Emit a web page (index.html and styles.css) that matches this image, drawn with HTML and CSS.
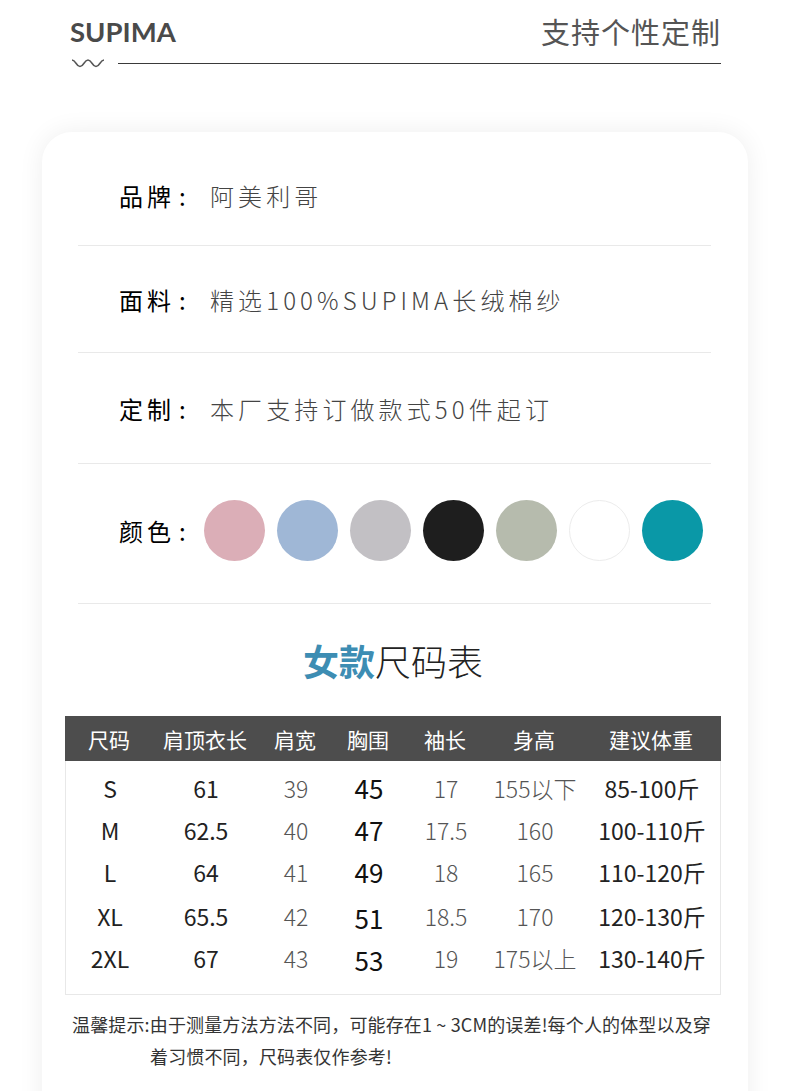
FILE: index.html
```html
<!DOCTYPE html>
<html lang="zh">
<head>
<meta charset="utf-8">
<link rel="stylesheet" href="styles.css">
</head>
<body>
<div class="page">
  <header class="top">
    <div class="top-row">
      <div class="brand">SUPIMA</div>
      <div class="slogan">支持个性定制</div>
    </div>
    <div class="rule-row">
      <svg class="wave" width="34" height="12" viewBox="0 0 34 12"><path d="M1 3 C5 3 5 9.5 9 9.5 S13 3 17 3 S21 9.5 25 9.5 S29 3 33 3" fill="none" stroke="#555" stroke-width="1.5"/></svg>
      <span class="rule"></span>
    </div>
  </header>

  <section class="card">
    <div class="info">
      <div class="row row-1"><span class="label">品牌<i>:</i></span><span class="value">阿美利哥</span></div>
      <div class="row row-2"><span class="label">面料<i>:</i></span><span class="value">精选100%SUPIMA长绒棉纱</span></div>
      <div class="row row-3"><span class="label">定制<i>:</i></span><span class="value">本厂支持订做款式50件起订</span></div>
      <div class="row row-4"><span class="label">颜色<i>:</i></span>
        <div class="swatches">
          <span class="dot pink"></span>
          <span class="dot blue"></span>
          <span class="dot grey"></span>
          <span class="dot black"></span>
          <span class="dot sage"></span>
          <span class="dot white"></span>
          <span class="dot teal"></span>
        </div>
      </div>
    </div>

    <h2 class="title"><b>女款</b>尺码表</h2>

    <div class="table">
      <div class="thead">
        <span>尺码</span><span>肩顶衣长</span><span>肩宽</span><span>胸围</span><span>袖长</span><span>身高</span><span>建议体重</span>
      </div>
      <div class="tbody">
        <div class="tr"><span>S</span><span>61</span><span class="lt">39</span><span class="bd">45</span><span class="lt">17</span><span class="lt">155以下</span><span>85-100斤</span></div>
        <div class="tr"><span>M</span><span>62.5</span><span class="lt">40</span><span class="bd">47</span><span class="lt">17.5</span><span class="lt">160</span><span>100-110斤</span></div>
        <div class="tr"><span>L</span><span>64</span><span class="lt">41</span><span class="bd">49</span><span class="lt">18</span><span class="lt">165</span><span>110-120斤</span></div>
        <div class="tr"><span>XL</span><span>65.5</span><span class="lt">42</span><span class="bd low">51</span><span class="lt">18.5</span><span class="lt">170</span><span>120-130斤</span></div>
        <div class="tr"><span>2XL</span><span>67</span><span class="lt">43</span><span class="bd low">53</span><span class="lt">19</span><span class="lt">175以上</span><span>130-140斤</span></div>
      </div>
    </div>

    <div class="note">
      <p class="note-1">温馨提示:由于测量方法方法不同，可能存在1 ~ 3CM的误差!每个人的体型以及穿</p>
      <p class="note-2">着习惯不同，尺码表仅作参考!</p>
    </div>
  </section>
</div>
</body>
</html>
```

FILE: styles.css
```css
* { box-sizing: border-box; margin: 0; padding: 0; }
html, body { background: #fff; }
body {
  font-family: "Noto Sans CJK SC", "Noto Sans", sans-serif;
  color: #222;
  overflow: hidden;
}
.page { width: 790px; height: 1091px; overflow: hidden; }

.top { padding: 0 69px 0 70px; }
.top-row {
  height: 52px;
  padding-top: 12px;
  display: flex;
  justify-content: space-between;
  align-items: center;
}
.brand {
  font-family: Lato, "Liberation Sans", sans-serif;
  font-weight: 700;
  font-size: 27.5px;
  line-height: 40px;
  color: #4a4a4a;
}
.slogan {
  font-size: 29px;
  line-height: 40px;
  color: #555;
  letter-spacing: 1px;
  margin-top: -3px;
}
.rule-row {
  height: 22px;
  display: flex;
  align-items: center;
}
.wave { display: block; margin-left: 1px; }
.rule {
  flex: 1;
  height: 1px;
  background: #3a3a3a;
  margin-left: 13px;
}

.card {
  margin: 58px 42px 0;
  height: 1100px;
  background: #fff;
  border-radius: 30px 30px 0 0;
  box-shadow: 0 0 26px rgba(0, 0, 0, 0.07);
}
.info { margin: 0 37px 0 36px; }
.row {
  display: flex;
  align-items: center;
  padding-left: 41px;
  border-bottom: 1px solid #e9e9e9;
}
.row-1 { height: 114px; padding-top: 13px; }
.row-2 { height: 107px; }
.row-3 { height: 111px; }
.row-4 { height: 140px; padding-bottom: 6px; }
.label {
  font-size: 24px;
  color: #000;
  letter-spacing: 4px;
  font-weight: 400;
  width: 91px;
  flex: none;
}
.label i { font-style: normal; font-weight: 400; margin-left: 4px; }
.value {
  font-size: 24px;
  color: #444;
  font-weight: 300;
  letter-spacing: 4.1px;
}
.swatches { display: flex; gap: 12px; margin-left: -6px; }
.dot {
  width: 61px;
  height: 61px;
  border-radius: 50%;
  display: block;
}
.pink { background: #dbaeb7; }
.blue { background: #9fb7d6; }
.grey { background: #c2c0c4; }
.black { background: #1e1e1e; }
.sage { background: #b6bbad; }
.white { background: #fff; border: 1px solid #ececec; }
.teal { background: #0a98a7; }

.title {
  margin-top: 31px;
  text-align: center;
  font-size: 36px;
  line-height: 50px;
  font-weight: 300;
  color: #222;
  padding-right: 4px;
}
.title b { font-weight: 700; color: #3d8db3; }

.table {
  margin: 31px 27px 0 23px;
}
.thead, .tr {
  display: grid;
  grid-template-columns: 88px 104px 76px 70px 84px 94px 140px;
  text-align: center;
}
.thead {
  height: 45px;
  align-items: center;
  background: #4d4d4d;
  color: #fff;
  font-size: 21px;
}
.tbody {
  border: 1px solid #e8e8e8;
  border-top: none;
  padding: 6px 0 17px;
}
.tr {
  height: 42px;
  align-items: center;
  font-size: 23px;
  color: #222;
}
.tr span { line-height: 42px; }
.tr .lt { font-weight: 300; color: #555; }
.tr .bd { font-weight: 400; font-size: 26px; color: #111; }
.tr .low { padding-top: 4px; }

.note {
  margin: 13px 0 0 30px;
  font-size: 18px;
  color: #333;
}
.note p { line-height: 32px; white-space: nowrap; letter-spacing: 0.15px; }
.note-2 { padding-left: 78px; }
```
